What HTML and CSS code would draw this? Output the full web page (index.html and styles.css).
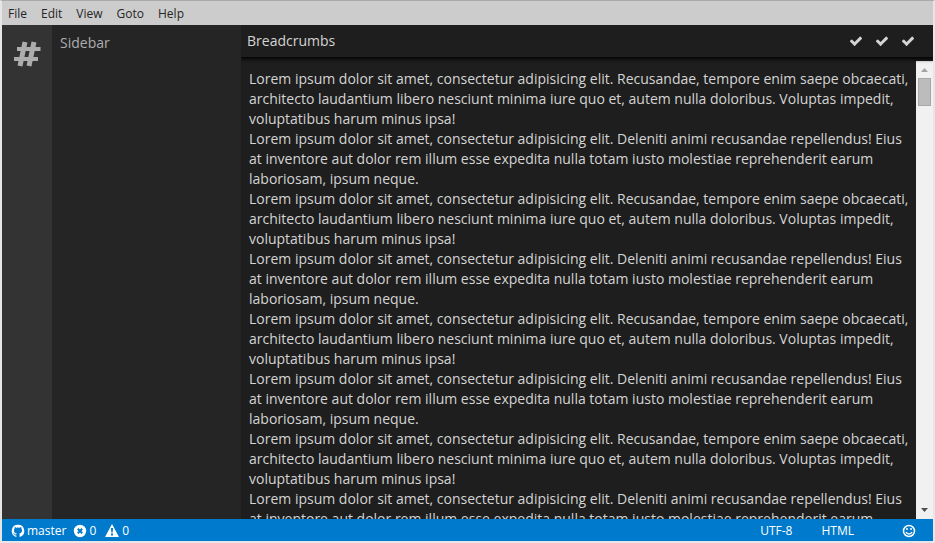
FILE: index.html
```
<!DOCTYPE html>
<html lang="en">
<head>
<meta charset="utf-8">
<title>Editor</title>
<link rel="stylesheet" href="styles.css">
</head>
<body>
<div class="app">
  <nav class="menubar" aria-label="Main menu">
    <button class="menu-item" type="button">File</button>
    <button class="menu-item" type="button">Edit</button>
    <button class="menu-item" type="button">View</button>
    <button class="menu-item" type="button">Goto</button>
    <button class="menu-item" type="button">Help</button>
  </nav>
  <div class="workspace">
    <div class="activity">
      <button class="activity-button" type="button" aria-label="Symbols">
        <svg class="hash" viewBox="0 0 28 28"><path class="upright" d="M12 2 7 26M21 2 16 26"/><path d="M4 9H27.500L26.500 9M1 19H25"/></svg>
      </button>
    </div>
    <aside class="sidebar">Sidebar</aside>
    <main class="editor">
      <header class="editor-header">
        <span>Breadcrumbs</span>
        <div class="actions">
          <button class="action" type="button" aria-label="Action one"><svg viewBox="0 0 1792 1792"><path d="M1671 566q0 40-28 68l-724 724-136 136q-28 28-68 28t-68-28l-136-136-362-362q-28-28-28-68t28-68l136-136q28-28 68-28t68 28l294 295 656-657q28-28 68-28t68 28l136 136q28 28 28 68z"/></svg></button>
          <button class="action" type="button" aria-label="Action two"><svg viewBox="0 0 1792 1792"><path d="M1671 566q0 40-28 68l-724 724-136 136q-28 28-68 28t-68-28l-136-136-362-362q-28-28-28-68t28-68l136-136q28-28 68-28t68 28l294 295 656-657q28-28 68-28t68 28l136 136q28 28 28 68z"/></svg></button>
          <button class="action" type="button" aria-label="Action three"><svg viewBox="0 0 1792 1792"><path d="M1671 566q0 40-28 68l-724 724-136 136q-28 28-68 28t-68-28l-136-136-362-362q-28-28-28-68t28-68l136-136q28-28 68-28t68 28l294 295 656-657q28-28 68-28t68 28l136 136q28 28 28 68z"/></svg></button>
        </div>
      </header>
      <div class="editor-body">
        <div class="content">
          <p>Lorem ipsum dolor sit amet, consectetur adipisicing elit. Recusandae, tempore enim saepe obcaecati, architecto laudantium libero nesciunt minima iure quo et, autem nulla doloribus. Voluptas impedit, voluptatibus harum minus ipsa!</p>
          <p>Lorem ipsum dolor sit amet, consectetur adipisicing elit. Deleniti animi recusandae repellendus! Eius at inventore aut dolor rem illum esse expedita nulla totam iusto molestiae reprehenderit earum laboriosam, ipsum neque.</p>
          <p>Lorem ipsum dolor sit amet, consectetur adipisicing elit. Recusandae, tempore enim saepe obcaecati, architecto laudantium libero nesciunt minima iure quo et, autem nulla doloribus. Voluptas impedit, voluptatibus harum minus ipsa!</p>
          <p>Lorem ipsum dolor sit amet, consectetur adipisicing elit. Deleniti animi recusandae repellendus! Eius at inventore aut dolor rem illum esse expedita nulla totam iusto molestiae reprehenderit earum laboriosam, ipsum neque.</p>
          <p>Lorem ipsum dolor sit amet, consectetur adipisicing elit. Recusandae, tempore enim saepe obcaecati, architecto laudantium libero nesciunt minima iure quo et, autem nulla doloribus. Voluptas impedit, voluptatibus harum minus ipsa!</p>
          <p>Lorem ipsum dolor sit amet, consectetur adipisicing elit. Deleniti animi recusandae repellendus! Eius at inventore aut dolor rem illum esse expedita nulla totam iusto molestiae reprehenderit earum laboriosam, ipsum neque.</p>
          <p>Lorem ipsum dolor sit amet, consectetur adipisicing elit. Recusandae, tempore enim saepe obcaecati, architecto laudantium libero nesciunt minima iure quo et, autem nulla doloribus. Voluptas impedit, voluptatibus harum minus ipsa!</p>
          <p>Lorem ipsum dolor sit amet, consectetur adipisicing elit. Deleniti animi recusandae repellendus! Eius at inventore aut dolor rem illum esse expedita nulla totam iusto molestiae reprehenderit earum laboriosam, ipsum neque.</p>
        </div>
        <div class="scrollbar" aria-hidden="true">
          <svg class="arrow arrow-up" viewBox="0 0 17 17"><path d="M5 11h7L8.500 7z"/></svg>
          <div class="thumb"></div>
          <svg class="arrow arrow-down" viewBox="0 0 17 17"><path d="M5 6h7L8.500 10z"/></svg>
        </div>
      </div>
    </main>
  </div>
  <footer class="statusbar">
    <div class="status-group">
      <span class="status-item"><svg viewBox="0 0 16 16"><path d="M8 1.800a6.200 6.200 0 0 0-2 12.100c.3.100.4-.1.400-.3v-1.200c-1.700.4-2.100-.8-2.100-.8-.3-.7-.7-.9-.7-.9-.6-.4 0-.4 0-.4.6 0 1 .6 1 .6.600 1 1.500.7 1.800.5 0-.4.200-.7.400-.8-1.400-.2-2.800-.7-2.800-3.100 0-.7.200-1.200.600-1.700 0-.1-.3-.8.100-1.600 0 0 .5-.2 1.700.6a6 6 0 0 1 3.200 0c1.200-.8 1.700-.6 1.700-.6.400.8.100 1.500.1 1.600.4.500.6 1 .6 1.700 0 2.400-1.400 2.900-2.800 3.100.2.200.4.600.4 1.200v1.800c0 .2.100.4.400.3A6.200 6.200 0 0 0 8 1.800z"/></svg>master</span>
      <span class="status-item"><svg viewBox="0 0 16 16"><circle cx="8" cy="8" r="6.200"/><path class="cross" d="M5.800 5.800l4.400 4.400M10.200 5.800l-4.400 4.400"/></svg>0</span>
      <span class="status-item warning"><svg viewBox="0 0 16 16"><path d="M8 1 15 14H1z"/><path class="mark" d="M7 5h2l-.3 4.500H7.300zM7 10.500h2v2H7z"/></svg>0</span>
    </div>
    <div class="status-group status-right">
      <span>UTF-8</span>
      <span class="language">HTML</span>
      <button class="feedback" type="button" aria-label="Feedback"><svg viewBox="0 0 16 16"><circle class="line" cx="8" cy="8" r="5.500"/><circle cx="6" cy="6" r="1"/><circle cx="10" cy="6" r="1"/><path class="line" d="M5 9q1 2 3 2t3-2"/></svg></button>
    </div>
  </footer>
</div>
</body>
</html>
```
FILE: styles.css
```
* { box-sizing: border-box; }
body {
  margin: 0;
  font: 14px/20px "Open Sans", sans-serif;
  color: #d4d4d4;
}
button {
  padding: 0;
  border: 0;
  background: none;
  color: inherit;
  font: inherit;
}
svg { display: block; fill: currentColor; }
p { margin: 0; }
.app {
  display: flex;
  flex-direction: column;
  height: 100vh;
  border: 2px solid #e6e6e6;
  border-top: 1px solid #a9a9a9;
}
.menubar {
  display: flex;
  flex: none;
  gap: 14px;
  height: 24px;
  padding: 2px 6px 0;
  background: #ccc;
  color: #252525;
  font-size: 12px;
}
.workspace { display: flex; flex: 1; min-height: 0; }
.activity {
  flex: none;
  width: 50px;
  padding-top: 15px;
  background: #333;
  color: #adadad;
}
.activity-button { display: block; margin: 0 auto; }
.hash { width: 28px; height: 28px; fill: none; stroke: currentColor; stroke-width: 4; }
.upright { stroke-width: 5; }
.sidebar {
  flex: none;
  width: 189px;
  padding: 8px;
  background: #252525;
  color: #adadad;
}
.editor {
  display: flex;
  flex: 1;
  flex-direction: column;
  min-width: 0;
  background: #1e1e1e;
}
.editor-header {
  display: flex;
  flex: none;
  justify-content: space-between;
  align-items: center;
  height: 32px;
  padding: 0 18px 0 6px;
  box-shadow: 0 1px 4px 1px #000;
  clip-path: inset(0 0 -8px 0);
}
.actions { display: flex; gap: 12px; }
.action svg { width: 14px; height: 14px; }
.editor-body { display: flex; flex: 1; min-height: 0; margin-top: 4px; }
.content { flex: 1; min-width: 0; padding: 8px 4px 8px 8px; overflow: hidden; }
.scrollbar {
  display: flex;
  flex: none;
  flex-direction: column;
  width: 17px;
  background: #f1f1f1;
}
.arrow { width: 17px; height: 17px; }
.arrow-up { color: #a3a3a3; }
.arrow-down { margin-top: auto; color: #505050; }
.thumb { height: 28px; margin: 0 2px; border: 1px solid #a8a8a8; background: #bcbcbc; }
.statusbar {
  display: flex;
  flex: none;
  justify-content: space-between;
  align-items: center;
  height: 22px;
  padding: 2px 16px 0 8px;
  background: #007acc;
  color: #fff;
  font-size: 12px;
}
.status-group, .status-item { display: flex; align-items: center; }
.status-group { gap: 6px; }
.status-item { gap: 1px; }
.warning { margin-left: 2px; gap: 2px; }
.status-item svg, .feedback svg { width: 16px; height: 16px; }
.cross { fill: none; stroke: #007acc; stroke-width: 2; }
.mark { fill: #007acc; }
.line { fill: none; stroke: currentColor; stroke-width: 1.5; }
.status-right { gap: 29px; }
.language { margin-right: 18px; }
```
